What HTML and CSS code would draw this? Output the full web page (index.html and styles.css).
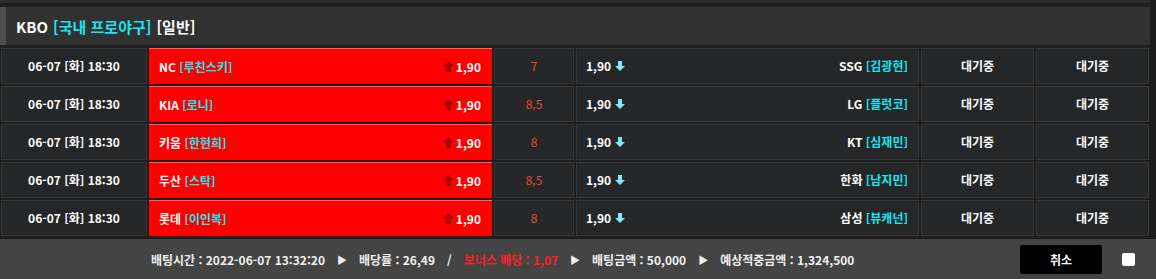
FILE: index.html
```html
<!DOCTYPE html>
<html lang="ko">
<head>
<meta charset="utf-8">
<link rel="stylesheet" href="styles.css">
</head>
<body>
<div class="wrap">
  <div class="topstrip"></div>
  <div class="header"><span class="w">KBO</span> <span class="cy">[국내 프로야구]</span> <span class="w">[일반]</span></div>
  <div class="rows">
    <div class="row">
      <div class="cell date">06-07 [화] 18:30</div>
      <div class="cell home"><span>NC <span class="cy">[루친스키]</span></span><span class="odd"><svg class="up" viewBox="0 0 10 10"><path d="M5 0 L10 5 L7 5 L7 10 L3 10 L3 5 L0 5 Z"/></svg>1,90</span></div>
      <div class="cell hc">7</div>
      <div class="cell away"><span class="odd">1,90<svg class="down" viewBox="0 0 10 10"><path d="M3 0 L7 0 L7 5 L10 5 L5 10 L0 5 L3 5 Z"/></svg></span><span>SSG <span class="cy">[김광현]</span></span></div>
      <div class="cell st">대기중</div>
      <div class="cell st">대기중</div>
    </div>
    <div class="row">
      <div class="cell date">06-07 [화] 18:30</div>
      <div class="cell home"><span>KIA <span class="cy">[로니]</span></span><span class="odd"><svg class="up" viewBox="0 0 10 10"><path d="M5 0 L10 5 L7 5 L7 10 L3 10 L3 5 L0 5 Z"/></svg>1,90</span></div>
      <div class="cell hc">8,5</div>
      <div class="cell away"><span class="odd">1,90<svg class="down" viewBox="0 0 10 10"><path d="M3 0 L7 0 L7 5 L10 5 L5 10 L0 5 L3 5 Z"/></svg></span><span>LG <span class="cy">[플럿코]</span></span></div>
      <div class="cell st">대기중</div>
      <div class="cell st">대기중</div>
    </div>
    <div class="row">
      <div class="cell date">06-07 [화] 18:30</div>
      <div class="cell home"><span>키움 <span class="cy">[한현희]</span></span><span class="odd"><svg class="up" viewBox="0 0 10 10"><path d="M5 0 L10 5 L7 5 L7 10 L3 10 L3 5 L0 5 Z"/></svg>1,90</span></div>
      <div class="cell hc">8</div>
      <div class="cell away"><span class="odd">1,90<svg class="down" viewBox="0 0 10 10"><path d="M3 0 L7 0 L7 5 L10 5 L5 10 L0 5 L3 5 Z"/></svg></span><span>KT <span class="cy">[심재민]</span></span></div>
      <div class="cell st">대기중</div>
      <div class="cell st">대기중</div>
    </div>
    <div class="row">
      <div class="cell date">06-07 [화] 18:30</div>
      <div class="cell home"><span>두산 <span class="cy">[스탁]</span></span><span class="odd"><svg class="up" viewBox="0 0 10 10"><path d="M5 0 L10 5 L7 5 L7 10 L3 10 L3 5 L0 5 Z"/></svg>1,90</span></div>
      <div class="cell hc">8,5</div>
      <div class="cell away"><span class="odd">1,90<svg class="down" viewBox="0 0 10 10"><path d="M3 0 L7 0 L7 5 L10 5 L5 10 L0 5 L3 5 Z"/></svg></span><span>한화 <span class="cy">[남지민]</span></span></div>
      <div class="cell st">대기중</div>
      <div class="cell st">대기중</div>
    </div>
    <div class="row">
      <div class="cell date">06-07 [화] 18:30</div>
      <div class="cell home"><span>롯데 <span class="cy">[이인복]</span></span><span class="odd"><svg class="up" viewBox="0 0 10 10"><path d="M5 0 L10 5 L7 5 L7 10 L3 10 L3 5 L0 5 Z"/></svg>1,90</span></div>
      <div class="cell hc">8</div>
      <div class="cell away"><span class="odd">1,90<svg class="down" viewBox="0 0 10 10"><path d="M3 0 L7 0 L7 5 L10 5 L5 10 L0 5 L3 5 Z"/></svg></span><span>삼성 <span class="cy">[뷰캐넌]</span></span></div>
      <div class="cell st">대기중</div>
      <div class="cell st">대기중</div>
    </div>
  </div>
</div>
<div class="footer">
  <div class="info">
    <span>배팅시간 : 2022-06-07 13:32:20</span>
    <span class="tri">▶</span>
    <span>배당률 : 26,49</span>
    <span class="sl">/</span>
    <span class="bonus">보너스 배당 : 1,07</span>
    <span class="tri">▶</span>
    <span>배팅금액 : 50,000</span>
    <span class="tri">▶</span>
    <span>예상적중금액 : 1,324,500</span>
  </div>
  <div class="btn">취소</div>
  <div class="chk"></div>
</div>
</body>
</html>
```

FILE: styles.css
```css
html, body {
  margin: 0;
  padding: 0;
  background: #1c1c1c;
  font-family: "Noto Sans CJK KR", "Noto Sans", sans-serif;
  font-size: 12px;
  color: #ffffff;
}
.wrap {
  width: 1150px;
  background: #1e1e1e;
}
.topstrip {
  height: 3px;
  background: #2c2c2c;
  margin-bottom: 4px;
}
.header {
  height: 38px;
  background: #313131;
  border-left: 6px solid #4e4e4e;
  box-sizing: border-box;
  padding-left: 10px;
  display: flex;
  align-items: center;
  gap: 5px;
  font-size: 15px;
  font-weight: 700;
}
.w { color: #ffffff; }
.cy { color: #19e6f0; }
.rows {
  padding: 3px 0 2px 1px;
  display: flex;
  flex-direction: column;
  gap: 2px;
}
.row {
  display: grid;
  grid-template-columns: 146px 343px 80px 343px 113px 113px;
  gap: 2px;
  height: 36px;
}
.cell {
  background: #252628;
  border: 1px solid #353638;
  box-sizing: border-box;
  display: flex;
  align-items: center;
  justify-content: center;
  font-weight: 700;
  line-height: 1;
}
.home {
  background: #ff0000;
  border: none;
  border-top: 1px solid #ff6060;
  justify-content: space-between;
  padding: 0 11px 0 10px;
}
.away {
  justify-content: space-between;
  padding: 0 10px 0 9px;
}
.hc {
  color: #e8493c;
  font-weight: 400;
}
.odd {
  display: flex;
  align-items: center;
  gap: 2px;
}
.up {
  width: 11px;
  height: 11px;
  fill: #a00000;
}
.down {
  width: 10px;
  height: 10px;
  fill: #7fe8f8;
  margin-left: 2px;
}
.footer {
  margin-top: 1px;
  height: 40px;
  background: #444444;
  display: flex;
  align-items: center;
  padding-left: 151px;
}
.info {
  display: flex;
  align-items: center;
  gap: 9px;
  width: 869px;
  color: #f0f0f0;
  font-weight: 700;
}
.tri { font-size: 10px; margin: 0 3px; }
.sl { margin: 0 3px; }
.bonus { color: #ff2020; }
.btn {
  width: 82px;
  height: 29px;
  background: #000000;
  border-radius: 2px;
  display: flex;
  align-items: center;
  justify-content: center;
  font-weight: 700;
}
.chk {
  width: 13px;
  height: 13px;
  background: #ffffff;
  border-radius: 2px;
  margin-left: 20px;
}
```
